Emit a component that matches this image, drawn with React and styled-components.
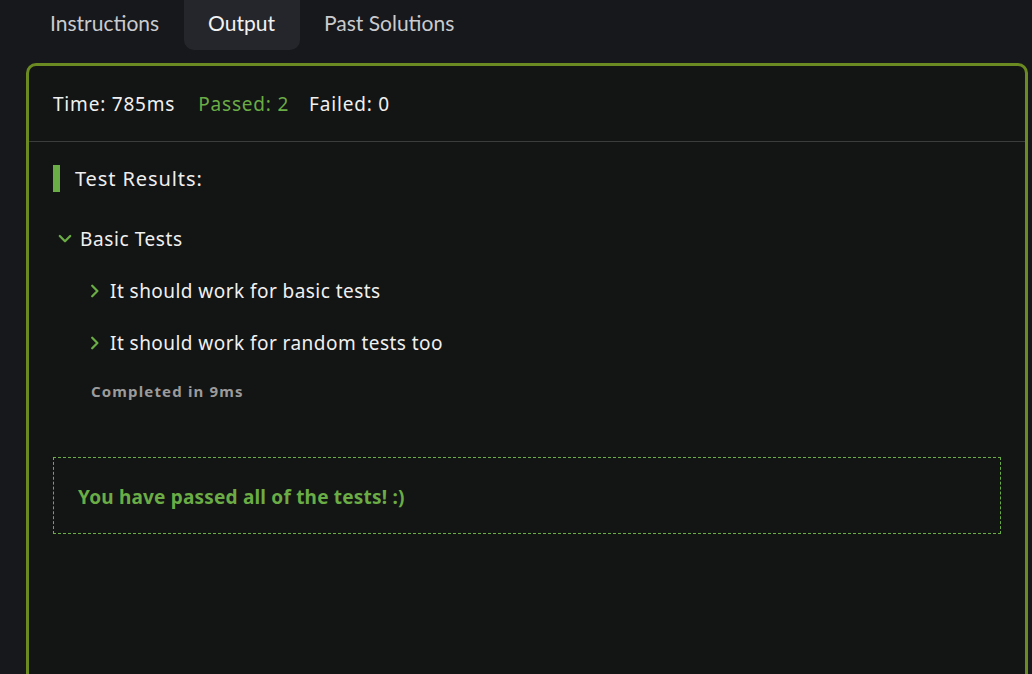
import React from 'react';
import styled, { createGlobalStyle } from 'styled-components';

const green = '#6aac45';
const olive = '#6b8a22';

const GlobalStyle = createGlobalStyle`
  html, body {
    margin: 0;
    padding: 0;
    background: #17181c;
    overflow: hidden;
  }
  body {
    font-family: "Noto Sans", sans-serif;
    color: #e8e8e8;
  }
`;

const Page = styled.div`
  height: 674px;
  overflow: hidden;
  padding-left: 26px;
`;

const Tabs = styled.div`
  display: flex;
  height: 50px;
`;

const Tab = styled.div`
  display: flex;
  align-items: center;
  padding: 0 25px 5px 24px;
  font-family: Lato, sans-serif;
  font-size: 21px;
  color: ${props => (props.active ? '#f2f2f2' : '#c9cbce')};
  background: ${props => (props.active ? '#25262b' : 'transparent')};
  border-radius: 0 0 10px 10px;
`;

const Panel = styled.div`
  margin-top: 13px;
  width: 996px;
  height: 700px;
  border: 3px solid ${olive};
  border-bottom: none;
  border-radius: 10px 10px 0 0;
  background: #131414;
  font-family: "Noto Sans", sans-serif;
`;

const Stats = styled.div`
  display: flex;
  align-items: center;
  height: 75px;
  padding: 0 24px;
  border-bottom: 1px solid #3b3c3c;
  font-size: 19px;
  letter-spacing: 0.8px;
`;

const Stat = styled.span`
  color: ${props => props.color || '#f0f0f0'};
  margin-right: ${props => props.gap || 0}px;
`;

const Body = styled.div`
  padding: 23px 24px;
`;

const Heading = styled.div`
  border-left: 7px solid ${green};
  padding-left: 15px;
  height: 27px;
  display: flex;
  align-items: center;
  font-size: 20px;
  letter-spacing: 0.9px;
  color: #eeeeee;
`;

const Group = styled.div`
  margin-top: 34px;
  padding-left: 5px;
`;

const Row = styled.div`
  display: flex;
  align-items: center;
  gap: ${props => props.gap}px;
  font-size: 19px;
  letter-spacing: ${props => props.spacing || 0.45}px;
  color: #f0f0f0;
  height: 26px;
`;

const Items = styled.div`
  padding-left: 32px;
  padding-top: 26px;
  display: flex;
  flex-direction: column;
  gap: 26px;
`;

const Completed = styled.div`
  font-size: 15px;
  font-weight: 700;
  letter-spacing: 1.15px;
  color: #9b9b9b;
  margin-top: -1px;
  padding-left: 1px;
`;

const PassedBox = styled.div`
  margin-top: 56px;
  height: 77px;
  box-sizing: border-box;
  border: 1px dashed ${green};
  display: flex;
  align-items: center;
  padding: 3px 0 0 24px;
  font-size: 19px;
  font-weight: 700;
  letter-spacing: 0.2px;
  color: ${green};
`;

const Chevron = ({ down }) =>
  down ? (
    <svg width="14" height="10" viewBox="0 0 14 10">
      <path
        d="M1.8 2 L7 7.2 L12.2 2"
        fill="none"
        stroke={green}
        strokeWidth="2.3"
        strokeLinecap="round"
        strokeLinejoin="round"
      />
    </svg>
  ) : (
    <svg width="10" height="14" viewBox="0 0 10 14">
      <path
        d="M2.2 1.8 L7.4 7 L2.2 12.2"
        fill="none"
        stroke={green}
        strokeWidth="2.3"
        strokeLinecap="round"
        strokeLinejoin="round"
      />
    </svg>
  );

export default function App() {
  return (
    <Page>
      <GlobalStyle />
      <Tabs>
        <Tab>Instructions</Tab>
        <Tab active>Output</Tab>
        <Tab>Past Solutions</Tab>
      </Tabs>
      <Panel>
        <Stats>
          <Stat gap={23}>Time: 785ms</Stat>
          <Stat gap={20} color={green}>Passed: 2</Stat>
          <Stat>Failed: 0</Stat>
        </Stats>
        <Body>
          <Heading>Test Results:</Heading>
          <Group>
            <Row gap={8} spacing={0.6}>
              <Chevron down />
              Basic Tests
            </Row>
            <Items>
              <Row gap={10}>
                <Chevron />
                It should work for basic tests
              </Row>
              <Row gap={10}>
                <Chevron />
                It should work for random tests too
              </Row>
              <Completed>Completed in 9ms</Completed>
            </Items>
          </Group>
          <PassedBox>You have passed all of the tests! :)</PassedBox>
        </Body>
      </Panel>
    </Page>
  );
}
